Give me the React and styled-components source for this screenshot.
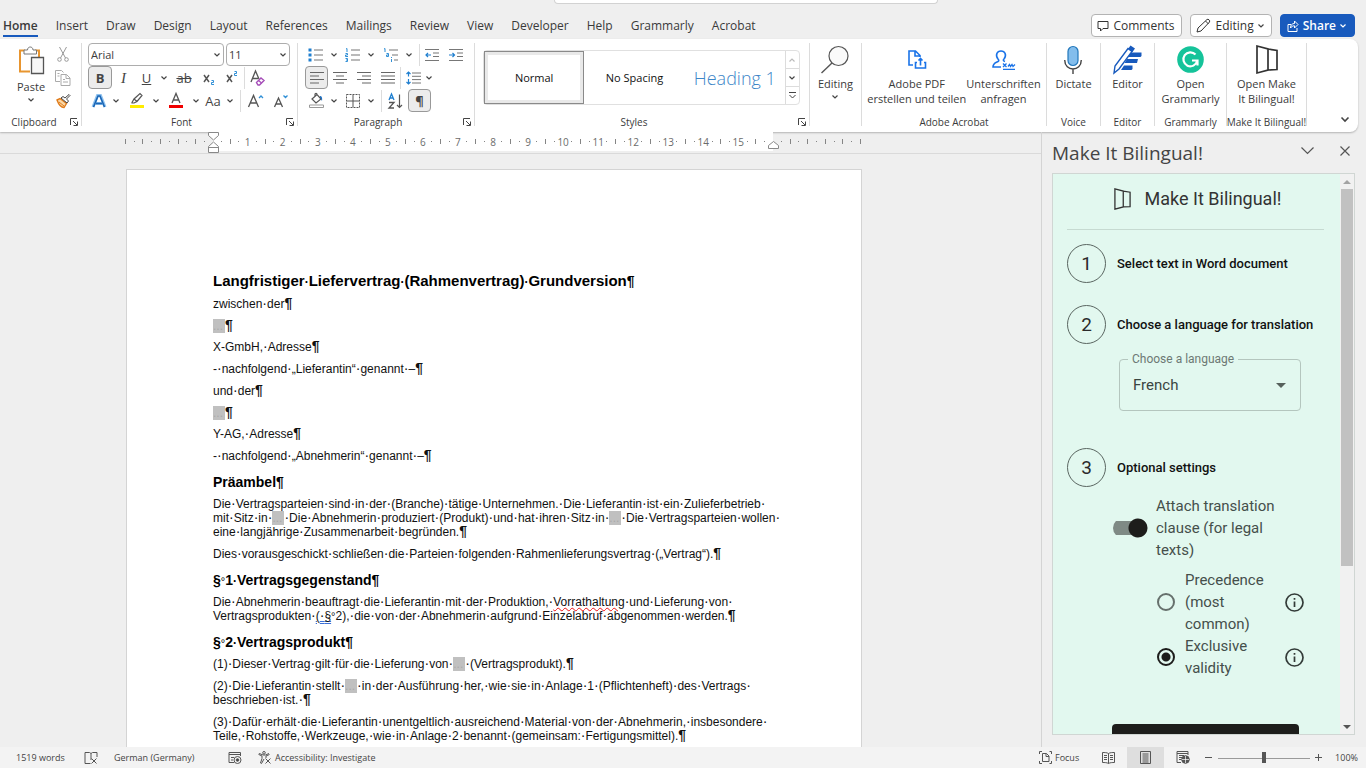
import React from "react";
import styled, { createGlobalStyle, css } from "styled-components";

const UI = `"Open Sans", "Noto Sans", sans-serif`;
const DOC = `"Liberation Sans", Arial, sans-serif`;
const WEB = `Roboto, "Liberation Sans", sans-serif`;

const GlobalStyle = createGlobalStyle`
  * { box-sizing: border-box; }
  body { margin: 0; background: #efefef; font-family: ${UI}; color: #3b3b3b; }
  button, input, select { font: inherit; color: inherit; }
  button { padding: 0; border: 0; background: none; }
  p, h1, h2, h3 { margin: 0; font-weight: 400; }
  svg { display: block; flex: none; overflow: visible; }
`;

const App = styled.div`
  display: flex;
  flex-direction: column;
  height: 100vh;
  overflow: hidden;
`;

/* ---------- title strip and tabs ---------- */
const TitleStrip = styled.div`
  height: 12px;
  flex: none;
  display: flex;
  justify-content: center;
  padding-left: 126px;
`;
const SearchBox = styled.div`
  width: 384px;
  height: 4px;
  background: #fff;
  border: 1px solid #d2d2d2;
  border-top: 0;
  border-radius: 0 0 4px 4px;
`;
const TabBar = styled.header`
  height: 27px;
  flex: none;
  display: flex;
  align-items: flex-end;
  justify-content: space-between;
  padding: 0 11px 2px 3px;
`;
const Tabs = styled.nav`
  display: flex;
  gap: 18px;
`;
const Tab = styled.a`
  font-size: 12px;
  line-height: 18px;
  color: #3a3a3a;
  text-decoration: none;
  white-space: nowrap;
  border-bottom: 2px solid ${(p) => (p.$active ? "#185abd" : "transparent")};
  font-weight: ${(p) => (p.$active ? 600 : 400)};
`;
const Actions = styled.div`
  display: flex;
  gap: 8px;
`;
const ActionButton = styled.button`
  height: 23px;
  display: flex;
  align-items: center;
  gap: 4px;
  padding: ${(p) => (p.$primary ? "0 8px 0 6px" : "0 7px 0 5px")};
  font-size: 12px;
  line-height: 20px;
  border-radius: 4px;
  border: 1px solid ${(p) => (p.$primary ? "#185abd" : "#b3b3b3")};
  background: ${(p) => (p.$primary ? "#185abd" : "#fff")};
  color: ${(p) => (p.$primary ? "#fff" : "#333")};
  font-weight: ${(p) => (p.$primary ? 600 : 400)};
`;

/* ---------- ribbon ---------- */
const Ribbon = styled.section`
  flex: none;
  height: 93px;
  margin-right: 8px;
  padding-left: 3px;
  display: flex;
  background: #fff;
  border-radius: 0 8px 8px 0;
  box-shadow: 0 1px 2px rgba(0, 0, 0, 0.25);
`;
const Group = styled.div`
  width: ${(p) => p.$w}px;
  flex: none;
  margin: 4px 0 2px;
  display: flex;
  flex-direction: column;
  padding-right: 1px;
  background: linear-gradient(#dcdcdc, #dcdcdc) right top / 1px 83px no-repeat;
  position: relative;
`;
const GroupBody = styled.div`
  flex: 1;
  min-height: 0;
  padding-left: ${(p) => p.$pad || 0}px;
`;
const GroupLabel = styled.div`
  height: 16px;
  display: flex;
  justify-content: center;
  align-items: center;
  font-size: 10px;
  line-height: 14px;
  white-space: nowrap;
  padding-right: ${(p) => (p.$launcher ? 16 : 0)}px;
`;
const Launcher = styled.button`
  position: absolute;
  right: 4px;
  bottom: 4px;
`;
const ToolRow = styled.div`
  height: 23px;
  display: flex;
  align-items: center;
`;
const Tool = styled.button`
  width: ${(p) => p.$w}px;
  height: 23px;
  flex: none;
  display: flex;
  align-items: center;
  justify-content: center;
  color: #444;
  font-size: 13px;
  line-height: 20px;
  white-space: nowrap;
  ${(p) =>
    p.$on &&
    css`
      background: #ececec;
      border: 1px solid #999;
      border-radius: 4px;
    `}
`;
const Italic = styled.i`
  font-family: "Liberation Serif", serif;
  font-size: 15px;
`;
const Sep = styled.i`
  width: 1px;
  height: 22px;
  flex: none;
  background: #dcdcdc;
  margin-left: ${(p) => p.$before || 0}px;
`;
const Combo = styled.label`
  width: ${(p) => p.$w}px;
  height: 23px;
  display: flex;
  align-items: center;
  padding: 0 3px 0 2px;
  margin-right: 2px;
  border: 1px solid #adadad;
  border-radius: 4px;
  select {
    appearance: none;
    flex: 1;
    min-width: 0;
    border: 0;
    padding: 0;
    background: none;
    font-size: 11px;
    line-height: 16px;
  }
`;
const Clipboard = styled.div`
  display: flex;
  gap: 6px;
  padding-left: 14px;
`;
const BigButton = styled.button`
  display: flex;
  flex-direction: column;
  align-items: center;
  min-width: ${(p) => p.$w || 0}px;
  font-size: 11px;
  line-height: 15px;
  white-space: nowrap;
  & > svg {
    margin-top: 4px;
  }
`;
const BigIcon = styled.span`
  height: ${(p) => (p.$tall ? 36 : 33)}px;
  display: flex;
  align-items: center;
  justify-content: center;
`;
const SmallStack = styled.div`
  display: flex;
  flex-direction: column;
`;
const Centered = styled.div`
  display: flex;
  justify-content: center;
`;
const Gallery = styled.div`
  display: flex;
  margin: 7px 9px 0 8px;
  height: 55px;
  border: 1px solid #e0e0e0;
  border-radius: 4px;
`;
const StyleCard = styled.button`
  flex: 1;
  margin: ${(p) => (p.$on ? "0" : "1px")};
  font-size: ${(p) => (p.$heading ? 18 : 11)}px;
  font-weight: ${(p) => (p.$heading ? 300 : 400)};
  color: ${(p) => (p.$heading ? "#3d86c8" : "#111")};
  white-space: nowrap;
  ${(p) =>
    p.$on &&
    css`
      border: 1px solid #8a8a8a;
      box-shadow: inset 0 0 0 3px #e9e9e9;
    `}
`;
const GalleryScroll = styled.div`
  width: 14px;
  display: flex;
  flex-direction: column;
  border-left: 1px solid #dcdcdc;
  button {
    flex: 1;
    display: flex;
    align-items: center;
    justify-content: center;
  }
  button + button {
    border-top: 1px solid #dcdcdc;
  }
`;
const CollapseButton = styled.button`
  margin: auto 9px 10px auto;
`;

/* ---------- work area ---------- */
const Work = styled.div`
  flex: 1;
  min-height: 0;
  display: flex;
`;
const Canvas = styled.main`
  flex: 1;
  min-width: 0;
  overflow: hidden;
  display: flex;
  flex-direction: column;
`;
const Ruler = styled.div`
  flex: none;
  height: 22px;
  padding: 0 0 2px 121px;
  display: flex;
  border-bottom: 1px solid #dadada;
  color: #6b6b6b;
  font-size: 10px;
  line-height: 16px;
`;
const Zone = styled.div`
  width: ${(p) => p.$w}px;
  flex: none;
  position: relative;
  display: grid;
  grid-template-columns: repeat(${(p) => p.$n}, minmax(0, 1fr));
  padding: 0 ${(p) => (p.$main ? 4 : 0)}px;
  margin: 0 ${(p) => (p.$main ? 0 : 4)}px 0 0;
  background: ${(p) => (p.$main ? "#fff" : "none")};
  & + & + & {
    margin-left: 4px;
  }
`;
const Mark = styled.span`
  display: flex;
  justify-content: center;
  align-items: center;
  white-space: nowrap;
  &::before {
    content: "";
    display: ${(p) => (p.$kind === "n" ? "none" : "block")};
    width: 1px;
    height: ${(p) => (p.$kind === "t" ? 5 : 1)}px;
    background: #858585;
  }
`;
const IndentMarker = styled.svg`
  position: absolute;
  top: ${(p) => p.$top}px;
  ${(p) => (p.$end ? "right: -6px;" : "left: -5px;")}
`;
const Sheet = styled.article`
  flex: none;
  width: 736px;
  min-height: 900px;
  margin: 15px 0 0 126px;
  padding: 102px 80px 80px 86px;
  background: #fff;
  border: 1px solid #d4d4d4;
  font-family: ${DOC};
  font-size: 12px;
  line-height: 14px;
  color: #111;
  white-space: nowrap;
`;
const DocTitle = styled.h1`
  font-size: 15px;
  line-height: 18px;
  font-weight: 700;
  color: #000;
  margin-bottom: 7px;
`;
const DocHeading = styled.h2`
  font-size: 14px;
  line-height: 16px;
  font-weight: 700;
  color: #000;
  margin: 11px 0 7px;
`;
const Para = styled.p`
  margin-bottom: ${(p) => (p.$tight ? 7 : 8)}px;
`;
const Line = styled.span`
  display: block;
`;
const Dot = styled.span`
  font-size: 14px;
  line-height: 0;
  h1 &,
  h2 & {
    font-size: 12px;
  }
`;
const Pilcrow = styled.span`
  font-size: 14px;
  line-height: 0;
  font-weight: 700;
`;
const FixedSpace = styled.span`
  font-size: 11px;
  line-height: 0;
  font-weight: 400;
`;
const Blank = styled.span`
  display: inline-block;
  width: 12px;
  height: 14px;
  vertical-align: bottom;
  background: #c0c0c0;
  color: #aaa;
`;
const Misspelt = styled.span`
  text-decoration: underline wavy #e11 1px;
  text-underline-offset: 1px;
`;
const Flagged = styled.span`
  text-decoration: underline double #3b6fd6 1px;
  text-underline-offset: 1px;
`;

/* ---------- task pane ---------- */
const Pane = styled.aside`
  width: 325px;
  flex: none;
  display: flex;
  flex-direction: column;
  border-left: 1px solid #d4d4d4;
  padding: 0 11px 12px 10px;
`;
const PaneHeader = styled.div`
  height: 41px;
  flex: none;
  display: flex;
  align-items: center;
  padding-right: 1px;
  h2 {
    flex: 1;
    font-size: 19px;
    line-height: 26px;
    font-weight: 400;
    color: #444;
  }
`;
const PaneButton = styled.button`
  width: 16px;
  height: 16px;
  display: flex;
  align-items: center;
  justify-content: center;
  margin: 0 1px 4px 21px;
`;
const Frame = styled.div`
  flex: 1;
  min-height: 0;
  display: flex;
  border: 1px solid #d0d6d3;
  background: #e2f8ef;
  font-family: ${WEB};
`;
const AddIn = styled.div`
  flex: 1;
  min-width: 0;
  overflow: hidden;
  padding: 0 16px 0 14px;
`;
const Scrollbar = styled.div`
  width: 14px;
  display: flex;
  flex-direction: column;
  justify-content: space-between;
  align-items: center;
  background: #f1f1f1;
`;
const ScrollThumb = styled.div`
  width: 12px;
  height: 377px;
  background: #c1c1c1;
  margin-bottom: auto;
`;
const ScrollArrow = styled.button`
  height: 15px;
  display: flex;
  align-items: center;
`;
const Brand = styled.div`
  height: 56px;
  display: flex;
  align-items: center;
  justify-content: center;
  gap: 14px;
  padding: 0 0 6px 4px;
  border-bottom: 1px solid #c6dad1;
  font-size: 18px;
  line-height: 24px;
  color: #333;
`;
const Step = styled.div`
  display: flex;
  align-items: center;
  gap: 11px;
  height: 39px;
  margin-top: ${(p) => p.$top}px;
  h3 {
    font-size: 13px;
    line-height: 20px;
    font-weight: 500;
    color: #111;
    white-space: nowrap;
  }
`;
const StepNumber = styled.span`
  width: 39px;
  height: 39px;
  flex: none;
  display: flex;
  align-items: center;
  justify-content: center;
  border: 1px solid #5a6661;
  border-radius: 50%;
  font-size: 19px;
  color: #2b2b2b;
`;
const Field = styled.div`
  position: relative;
  margin: 15px 23px 0 52px;
  height: 52px;
  display: flex;
  align-items: center;
  border: 1px solid #b4c6be;
  border-radius: 4px;
  label {
    position: absolute;
    left: 8px;
    top: -8px;
    padding: 0 4px;
    background: #e2f8ef;
    font-size: 12px;
    line-height: 14px;
    color: #6d7974;
  }
  select {
    appearance: none;
    flex: 1;
    align-self: stretch;
    border: 0;
    padding: 0 13px;
    background: none;
    font-size: 15px;
    color: #3a4541;
  }
  svg {
    margin-right: 14px;
  }
`;
const SwitchRow = styled.div`
  display: flex;
  align-items: center;
  gap: 8px;
  margin: 8px 30px 0 46px;
  font-size: 15px;
  line-height: 22px;
  color: #454f4b;
`;
const Switch = styled.input`
  appearance: none;
  flex: none;
  width: 35px;
  height: 20px;
  margin: 0;
  border-radius: 10px;
  background:
    radial-gradient(circle at 25px 10px, #1d1d1b 9px, transparent 10px),
    linear-gradient(#7f8a85, #7f8a85) 0 3px / 30px 14px no-repeat;
`;
const RadioRow = styled.div`
  display: flex;
  align-items: center;
  margin: 0 20px 0 90px;
  padding-top: ${(p) => p.$top || 0}px;
  font-size: 15px;
  line-height: 22px;
  color: #454f4b;
  label {
    flex: 1;
    padding: 0 18px 0 10px;
  }
`;
const Radio = styled.input`
  appearance: none;
  flex: none;
  width: 18px;
  height: 18px;
  margin: 0;
  border: 2px solid #66706c;
  border-radius: 50%;
  &:checked {
    border-color: #1d1d1b;
    background: radial-gradient(circle, #1d1d1b 4px, transparent 5px);
  }
`;
const SubmitButton = styled.button`
  display: block;
  width: 187px;
  height: 36px;
  margin: 45px 0 0 45px;
  border-radius: 4px;
  background: #1d1d1b;
`;

/* ---------- status bar ---------- */
const StatusBar = styled.footer`
  flex: none;
  height: 21px;
  display: flex;
  align-items: center;
  justify-content: space-between;
  background: #f3f3f3;
  padding: 0 8px 0 16px;
  font-size: 9px;
  line-height: 14px;
  color: #444;
`;
const StatusSide = styled.div`
  display: flex;
  align-items: center;
  height: 21px;
`;
const StatusItem = styled.button`
  display: flex;
  align-items: center;
  justify-content: ${(p) => (p.$center ? "center" : p.$end ? "flex-end" : "flex-start")};
  gap: 3px;
  height: 21px;
  width: ${(p) => (p.$w ? p.$w + "px" : "auto")};
  white-space: nowrap;
  background: ${(p) => (p.$on ? "#dedede" : "none")};
`;
const Zoom = styled.input`
  appearance: none;
  width: 92px;
  height: 12px;
  margin: 0 1px 0 2px;
  background: linear-gradient(#9a9a9a, #9a9a9a) 0 6px / 100% 1px no-repeat;
  &::-webkit-slider-thumb {
    appearance: none;
    width: 4px;
    height: 11px;
    background: #555;
  }
`;

/* ---------- icons ---------- */
const Svg = ({ w, h, children, ...rest }) => (
  <svg width={w} height={h} viewBox={`0 0 ${w} ${h}`} fill="none" stroke="#555" strokeWidth="1" aria-hidden="true" {...rest}>
    {children}
  </svg>
);
const Chev = ({ s = 6, c = "#444", up, sw = 1.2 }) => (
  <Svg w={s} h={s / 2 + 1} stroke={c} strokeWidth={sw}>
    <path d={up ? `M.5 ${s / 2 + 0.5}L${s / 2} 1L${s - 0.5} ${s / 2 + 0.5}` : `M.5 .5L${s / 2} ${s / 2}L${s - 0.5} .5`} />
  </Svg>
);
const LaunchIcon = () => (
  <Svg w={8} h={8}>
    <path d="M.5 7V.5H7M3 3l4 4M7.5 3.5v4h-4" stroke="#444" />
  </Svg>
);
const PasteIcon = () => (
  <Svg w={27} h={30}>
    <path d="M7 4.500H2v21h10M17 4.500h4V11" stroke="#e8952f" strokeWidth="2" />
    <path d="M6 8V4h3.500c0-4 5.500-4 5.500 0H18.500v4z" fill="#fff" stroke="#777" />
    <path d="M13.500 11.500h12v16h-12z" fill="#f7f7f7" stroke="#555" strokeWidth="1.300" />
  </Svg>
);
const CutIcon = () => (
  <Svg w={12} h={15} stroke="#999">
    <path d="M2.500 0L8.500 11M9.500 0L3.500 11" />
    <circle cx="2.500" cy="12.500" r="1.800" />
    <circle cx="9.500" cy="12.500" r="1.800" />
  </Svg>
);
const CopyIcon = () => (
  <Svg w={16} h={16} stroke="#aaa">
    <path d="M5 11.500H.5v-11h6l2 2" />
    <path d="M6 4.500h5.500l3.500 3.500v7.500H6zM11 4.500V8.500h4M8 9.500h2M8 12h5M2.500 3.500h2M2.500 6h2" />
  </Svg>
);
const BrushIcon = () => (
  <Svg w={15} h={14}>
    <path d="M1 6l3-1.500 6.500 5-2.500 4c-3 0-5-2-7-7.500z" fill="#fbd9a8" stroke="#e07b1a" strokeWidth="1.400" />
    <path d="M3 8l5 4" stroke="#e07b1a" />
    <path d="M5 4l6 5 1.500-2-2-2L14 1.500 13 .5 9 4 7 2.500z" fill="#fff" stroke="#444" />
  </Svg>
);
const EraserA = () => (
  <Svg w={16} h={16} strokeWidth="1.300">
    <path d="M1 12L5.500 1 9 9M2.700 8.500H8" />
    <path d="M6.500 12.500L11 8l3 2.500-4.500 4.500H8z" stroke="#a54db8" strokeWidth="1.400" fill="#fff" />
    <path d="M8.500 10.500l3 2.500" stroke="#a54db8" />
  </Svg>
);
const EffectA = () => (
  <Svg w={14} h={14}>
    <path d="M1 13L5.500 1.500h3L13 13M3.500 9.500h7" stroke="#8ec1ee" strokeWidth="3" />
    <path d="M1.500 13L6 2h2l4.500 11M4 9.500h6" stroke="#1b66b5" strokeWidth="1.600" />
  </Svg>
);
const HighlightIcon = () => (
  <Svg w={16} h={16}>
    <path d="M3 9.500L5 6l6-5.500 2 2L8 8.500 5 10H3zM5 6l3 2.500" stroke="#555" strokeWidth="1.200" />
    <path d="M1 12h14v3H1z" fill="#ffec00" stroke="none" />
  </Svg>
);
const ColorA = () => (
  <Svg w={16} h={16}>
    <path d="M4 10L8 .5 12 10M5.500 7h5" strokeWidth="1.300" />
    <path d="M1 12h14v3H1z" fill="#f00000" stroke="none" />
  </Svg>
);
const SizeA = ({ small, up }) => (
  <Svg w={15} h={14} strokeWidth="1.300">
    <path d={small ? "M1.500 13L5.500 4l4 9M3 10h5" : "M.5 13L5.500 1.500 10.500 13M2.500 9h6"} />
    <path d={up ? "M11 4l2-2 2 2" : "M10.500 1.500l2 2 2-2"} stroke="#2f8fd6" />
  </Svg>
);
const ListIcon = ({ kind }) => (
  <Svg w={16} h={14}>
    <path
      d={kind === "multi" ? "M6 2h9M9 7h6M11 12h4" : "M6 2h9M6 7h9M6 12h9"}
      stroke="#777"
      strokeWidth="1.200"
    />
    {kind === "bullet" && <path d="M.5 .5h3v3h-3zM.5 5.500h3v3h-3zM.5 10.500h3v3h-3z" fill="#1f7fd0" stroke="none" />}
    {kind === "number" && <path d="M1 1l1-.5V4M.5 5.500h2v1.500h-2V8.500h2.500M.5 10.500h2V13.500h-2M1 12h1.500" stroke="#2f8fd6" />}
    {kind === "multi" && <path d="M1 1l1-.5V4M3.500 5.500h2V8.500h-2V7h2M8.500 11v3M8.500 9v1" stroke="#2f8fd6" />}
  </Svg>
);
const IndentIcon = ({ out }) => (
  <Svg w={14} h={14}>
    <path d="M0 1.500h14M8 5h6M8 8.500h6M0 12.500h14" stroke="#777" strokeWidth="1.200" />
    <path d={out ? "M6 7H1M3 5L1 7l2 2" : "M0 7h5M3.500 5l2 2-2 2"} stroke="#1f7fd0" strokeWidth="1.200" />
  </Svg>
);
const AlignIcon = ({ kind }) => {
  const d = {
    left: "M0 1.500h14M0 5h9M0 8.500h14M0 12h9",
    center: "M0 1.500h14M3 5h8M0 8.500h14M3 12h8",
    right: "M0 1.500h14M5 5h9M0 8.500h14M5 12h9",
    full: "M0 1.500h14M0 5h14M0 8.500h14M0 12h14",
  }[kind];
  return (
    <Svg w={14} h={14}>
      <path d={d} stroke="#666" strokeWidth="1.200" />
    </Svg>
  );
};
const SpacingIcon = () => (
  <Svg w={15} h={14}>
    <path d="M6 2h9M6 5.300h9M6 8.600h9M6 12h9" stroke="#777" />
    <path d="M2.500 1v4.500M.5 3l2-2 2 2M2.500 8v5M.5 11l2 2 2-2" stroke="#1f7fd0" strokeWidth="1.200" />
  </Svg>
);
const BucketIcon = () => (
  <Svg w={15} h={15}>
    <path d="M3 6l5-4.500L12 6 7 10zM6 3V1.500C6 0 8 0 8 1.500" strokeWidth="1.200" />
    <path d="M11 3c2 0 2.500 2 2 5-1-1-1-3-2-3z" fill="#1f6fc0" stroke="none" />
    <path d="M.5 12h14v2.500H.5z" stroke="#999" />
  </Svg>
);
const BordersIcon = () => (
  <Svg w={14} h={14}>
    <path d="M.5 .5h13v13H.5z" stroke="#555" strokeDasharray="2 1" />
    <path d="M7 1v12M1 7h12" stroke="#555" />
  </Svg>
);
const SortIcon = () => (
  <Svg w={15} h={16}>
    <path d="M1 7L3.500 1 6 7M2 5h3" stroke="#1f7fd0" strokeWidth="1.300" />
    <path d="M1 9.500h5l-5 5.500h5" strokeWidth="1.300" />
    <path d="M11.500 1.500v13M9 12l2.500 2.500L14 12" strokeWidth="1.200" />
  </Svg>
);
const SearchIcon = () => (
  <Svg w={28} h={28}>
    <circle cx="17.500" cy="10" r="9.500" fill="#fafafa" strokeWidth="1.200" />
    <path d="M11 17L.5 27" strokeWidth="1.400" />
  </Svg>
);
const PdfIcon = () => (
  <Svg w={18} h={19} stroke="#1a73e8" strokeWidth="1.600">
    <path d="M5 15H1V1h6.500L12 5.500V7M7 1v5h5" />
    <path d="M9 12.500H7.500V18h10v-5.500H16M12.500 15.500V9M10.500 10.500l2-2 2 2" />
  </Svg>
);
const SignIcon = () => (
  <Svg w={24} h={20} stroke="#1a73e8" strokeWidth="1.600">
    <path d="M9 17H1c0-4 3-4.500 5-5.500 1-.5 1-1.500 0-2.500C3 5 5 1 9 1s6 4 3 8c-1 1-1 1.800 1 2.500" />
    <path d="M11 13.500l3.500 3.500M14.500 13.500L11 17M16 16.500l1.500-2 1 2 1.500-2 1 2 2-2M11 19.300h12" strokeWidth="1.300" />
  </Svg>
);
const MicIcon = () => (
  <Svg w={18} h={28}>
    <rect x="4" y=".5" width="10" height="19" rx="5" fill="#83bdec" stroke="#2277bb" strokeWidth="1.200" />
    <path d="M.7 14c0 12 16.600 12 16.600 0M9 23v5" stroke="#444" strokeWidth="1.400" />
  </Svg>
);
const EditorIcon = () => (
  <Svg w={29} h={29}>
    <path d="M17 7.500h11.500V11l-1 1H14zM14 14h11l-1 4H11.500zM11 20.500h8.500V24l-1 1H8z" fill="#185abd" stroke="none" />
    <path d="M1 28l1-7L15 3.500l4 3L6 24z" fill="#fff" stroke="#185abd" strokeWidth="1.400" />
    <path d="M15 4L17.500.5l4.500 3L19.500 7z" fill="#185abd" stroke="none" />
  </Svg>
);
const GrammarlyIcon = () => (
  <Svg w={27} h={27}>
    <circle cx="13.500" cy="13.500" r="13.300" fill="#15c39a" stroke="none" />
    <path d="M18.500 8.500a7 7 0 1 0 1.700 6.500M15 14.500h5.500v5" stroke="#fff" strokeWidth="2.200" />
  </Svg>
);
const WindowIcon = ({ w = 22, h = 29 }) => (
  <svg width={w} height={h} viewBox="0 0 22 29" fill="none" stroke="#333" strokeWidth="1.700" aria-hidden="true">
    <path d="M1 1l11 3v21L1 28zM12 4l9 1.500v19L12 25" />
  </svg>
);
const CommentIcon = () => (
  <Svg w={12} h={12} stroke="#333">
    <path d="M1 1.500h10v7H6L3.500 11V8.500H1z" />
  </Svg>
);
const PencilIcon = () => (
  <Svg w={15} h={15} stroke="#333">
    <path d="M1 14l1-4L11 1.500c1-1 3.500 1 2.500 2.500L5 13zM9.500 3l3 3" />
  </Svg>
);
const ShareIcon = () => (
  <Svg w={12} h={12} stroke="#fff">
    <path d="M4 4.500H1v7h9V8M3.500 8c0-3 1.500-4.500 4-4.500V1L11 4.500 7.500 8V5.800C5.500 5.800 4.500 6.500 3.500 8z" />
  </Svg>
);
const InfoIcon = () => (
  <Svg w={19} h={19} stroke="#333b38">
    <circle cx="9.500" cy="9.500" r="8.500" strokeWidth="1.700" />
    <path d="M9.500 8.500v5.500M9.500 5v1.800" strokeWidth="1.700" />
  </Svg>
);
const ProofIcon = () => (
  <Svg w={14} h={12}>
    <path d="M6.500 11.500H1V.5h4.500l1.500 1 1.500-1H13V5M7 1.500V8M7.500 6.500l5 5M12.500 6.500l-5 5" />
  </Svg>
);
const MacroIcon = () => (
  <Svg w={14} h={12}>
    <path d="M6 10.500H1V.5h11.500V4M1 2.500h11.500M3 5.500h3M3 8h2" />
    <circle cx="9.500" cy="8" r="3.500" />
    <circle cx="9.500" cy="8" r="1.300" fill="#444" />
  </Svg>
);
const AccessIcon = () => (
  <Svg w={14} h={13}>
    <circle cx="6" cy="1.800" r="1.300" />
    <path d="M.8 3.500L4 5v2.500L2.500 12l1 .5L6 8M11.500 3.500L8 5v2M.8 3.500l.5-1L5 4h2.500L11 2.500M7.500 7.500l5 5M12.500 7.500l-5 5" />
  </Svg>
);
const FocusIcon = () => (
  <Svg w={13} h={13}>
    <path d="M.5 3V.5H3M10.500 .5h2V3M.5 10v2.500H3M12.500 10v2.500h-2M3.500 2.500h4l2.500 2.500v5.500H3.500zM7 2.500V5.500h3" />
  </Svg>
);
const ReadIcon = () => (
  <Svg w={13} h={12}>
    <path d="M6.500 1.500V11.500M6.500 1.500C5 .5 2.500 .5.5 .5v10c2 0 4.500 0 6 1 1.500-1 4-1 6-1V.5c-2 0-4.500 0-6 1zM2 3.500h3M2 5.500h3M2 7.500h3M8 3.500h3M8 5.500h3M8 7.500h3" />
  </Svg>
);
const PrintIcon = () => (
  <Svg w={11} h={13}>
    <path d="M.5 .5h10v12H.5zM2.500 3h6M2.500 5h6M2.500 7h6M2.500 9h6M2.500 11h6" />
  </Svg>
);
const WebIcon = () => (
  <Svg w={14} h={13}>
    <path d="M5 11.500H1V.5h11V4M1 2.500h11M3 4.500h5M3 6.500h3M3 8.500h2" />
    <circle cx="9.500" cy="8.500" r="3.800" fill="#555" />
    <path d="M6 8.500h7M9.500 5v7" stroke="#fff" strokeWidth=".7" />
  </Svg>
);
const Triangle = ({ up, w = 8, c = "#555" }) => (
  <svg width={w} height={w / 2} viewBox="0 0 8 4" aria-hidden="true">
    <path d={up ? "M0 4L4 0l4 4z" : "M0 0h8L4 4z"} fill={c} />
  </svg>
);

/* ---------- parts ---------- */
const Drop = ({ w, label }) => (
  <Tool $w={w} aria-label={label}>
    <Chev />
  </Tool>
);
const RibbonGroup = ({ w, pad, label, launcher, children }) => (
  <Group $w={w}>
    <GroupBody $pad={pad}>{children}</GroupBody>
    <GroupLabel $launcher={launcher}>{label}</GroupLabel>
    {launcher && (
      <Launcher aria-label={`${label} settings`}>
        <LaunchIcon />
      </Launcher>
    )}
  </Group>
);
const Big = ({ w, icon, lines }) => (
  <BigButton $w={w}>
    <BigIcon>{icon}</BigIcon>
    {lines.map((l) => (
      <span key={l}>{l}</span>
    ))}
  </BigButton>
);

// Draws formatting marks: spaces as centred dots, fixed spaces and paragraph ends with their own glyphs.
const T = ({ children }) =>
  children.split(/([ °¶])/).map((part, i) => {
    if (part === " ") return <Dot key={i}>·</Dot>;
    if (part === "°") return <FixedSpace key={i}>°</FixedSpace>;
    if (part === "¶") return <Pilcrow key={i}>¶</Pilcrow>;
    return <React.Fragment key={i}>{part}</React.Fragment>;
  });
const Gap = () => <Blank>...</Blank>;

const mainMarks = Array.from({ length: 63 }, (_, i) => {
  const q = i + 1;
  if (q % 4 === 0) return { k: "n", v: q / 4 };
  return { k: q % 2 === 0 ? "t" : "d" };
});
const TABS = ["Home", "Insert", "Draw", "Design", "Layout", "References", "Mailings", "Review", "View", "Developer", "Help", "Grammarly", "Acrobat"];

export default function WordWindow() {
  return (
    <App>
      <GlobalStyle />
      <TitleStrip>
        <SearchBox />
      </TitleStrip>
      <TabBar>
        <Tabs>
          {TABS.map((t, i) => (
            <Tab key={t} href="#" $active={i === 0}>
              {t}
            </Tab>
          ))}
        </Tabs>
        <Actions>
          <ActionButton>
            <CommentIcon />
            Comments
          </ActionButton>
          <ActionButton>
            <PencilIcon />
            Editing
            <Chev />
          </ActionButton>
          <ActionButton $primary>
            <ShareIcon />
            Share
            <Chev c="#fff" />
          </ActionButton>
        </Actions>
      </TabBar>

      <Ribbon>
        <RibbonGroup w={79} label="Clipboard" launcher>
          <Clipboard>
            <BigButton>
              <BigIcon $tall><PasteIcon /></BigIcon>
              <span>Paste</span>
              <Chev />
            </BigButton>
            <SmallStack>
              <Tool $w={24} aria-label="Cut"><CutIcon /></Tool>
              <Tool $w={24} aria-label="Copy"><CopyIcon /></Tool>
              <Tool $w={24} aria-label="Format painter"><BrushIcon /></Tool>
            </SmallStack>
          </Clipboard>
        </RibbonGroup>

        <RibbonGroup w={216} pad={6} label="Font" launcher>
          <ToolRow>
            <Combo $w={136}>
              <select aria-label="Font name"><option>Arial</option></select>
              <Chev />
            </Combo>
            <Combo $w={64}>
              <select aria-label="Font size"><option>11</option></select>
              <Chev />
            </Combo>
          </ToolRow>
          <ToolRow>
            <Tool $w={24} $on><b>B</b></Tool>
            <Tool $w={23}><Italic>I</Italic></Tool>
            <Tool $w={23}><u>U</u></Tool>
            <Drop w={12} label="Underline style" />
            <Tool $w={28}><s>ab</s></Tool>
            <Tool $w={24} aria-label="Subscript">
              <Svg w={14} h={14}>
                <path d="M1 4l5 7M6 4L1 11" strokeWidth="1.500" />
                <path d="M8.500 9.500h2v2h-2v2H11" stroke="#2f8fd6" />
              </Svg>
            </Tool>
            <Tool $w={22} aria-label="Superscript">
              <Svg w={14} h={14}>
                <path d="M1 4l5 7M6 4L1 11" strokeWidth="1.500" />
                <path d="M8.500 .5h2v2h-2v2H11" stroke="#2f8fd6" />
              </Svg>
            </Tool>
            <Sep />
            <Tool $w={26} aria-label="Clear formatting"><EraserA /></Tool>
          </ToolRow>
          <ToolRow>
            <Tool $w={22} aria-label="Text effects"><EffectA /></Tool>
            <Drop w={12} label="Text effects menu" />
            <Tool $w={30} aria-label="Highlight"><HighlightIcon /></Tool>
            <Drop w={8} label="Highlight colours" />
            <Tool $w={32} aria-label="Font colour"><ColorA /></Tool>
            <Drop w={8} label="Font colours" />
            <Tool $w={26}>Aa</Tool>
            <Drop w={8} label="Change case" />
            <Sep $before={6} />
            <Tool $w={28} aria-label="Grow font"><SizeA up /></Tool>
            <Tool $w={22} aria-label="Shrink font"><SizeA small /></Tool>
          </ToolRow>
        </RibbonGroup>

        <RibbonGroup w={177} pad={7} label="Paragraph" launcher>
          <ToolRow>
            <Tool $w={22} aria-label="Bullets"><ListIcon kind="bullet" /></Tool>
            <Drop w={14} label="Bullet styles" />
            <Tool $w={24} aria-label="Numbering"><ListIcon kind="number" /></Tool>
            <Drop w={12} label="Number styles" />
            <Tool $w={28} aria-label="Multilevel list"><ListIcon kind="multi" /></Tool>
            <Drop w={8} label="List styles" />
            <Sep $before={6} />
            <Tool $w={24} aria-label="Decrease indent"><IndentIcon out /></Tool>
            <Tool $w={24} aria-label="Increase indent"><IndentIcon /></Tool>
          </ToolRow>
          <ToolRow>
            <Tool $w={23} $on aria-label="Align left"><AlignIcon kind="left" /></Tool>
            <Tool $w={24} aria-label="Centre"><AlignIcon kind="center" /></Tool>
            <Tool $w={24} aria-label="Align right"><AlignIcon kind="right" /></Tool>
            <Tool $w={24} aria-label="Justify"><AlignIcon kind="full" /></Tool>
            <Sep />
            <Tool $w={24} aria-label="Line spacing"><SpacingIcon /></Tool>
            <Drop w={8} label="Line spacing menu" />
          </ToolRow>
          <ToolRow>
            <Tool $w={22} aria-label="Shading"><BucketIcon /></Tool>
            <Drop w={14} label="Shading colours" />
            <Tool $w={24} aria-label="Borders"><BordersIcon /></Tool>
            <Drop w={12} label="Border styles" />
            <Sep $before={4} />
            <Tool $w={26} aria-label="Sort"><SortIcon /></Tool>
            <Tool $w={23} $on><b>¶</b></Tool>
          </ToolRow>
        </RibbonGroup>

        <RibbonGroup w={335} label="Styles" launcher>
          <Gallery>
            <StyleCard $on>Normal</StyleCard>
            <StyleCard>No Spacing</StyleCard>
            <StyleCard $heading>Heading 1</StyleCard>
            <GalleryScroll>
              <button aria-label="Previous styles"><Chev up c="#bbb" /></button>
              <button aria-label="Next styles"><Chev /></button>
              <button aria-label="All styles">
                <Svg w={7} h={7} stroke="#444"><path d="M0 .5h7M.5 3l3 3 3-3" /></Svg>
              </button>
            </GalleryScroll>
          </Gallery>
        </RibbonGroup>

        <RibbonGroup w={52}>
          <Centered>
            <BigButton>
              <BigIcon><SearchIcon /></BigIcon>
              <span>Editing</span>
              <Chev />
            </BigButton>
          </Centered>
        </RibbonGroup>
        <RibbonGroup w={185} label="Adobe Acrobat">
          <Centered>
            <Big w={98} icon={<PdfIcon />} lines={["Adobe PDF", "erstellen und teilen"]} />
            <Big w={74} icon={<SignIcon />} lines={["Unterschriften", "anfragen"]} />
          </Centered>
        </RibbonGroup>
        <RibbonGroup w={54} label="Voice">
          <Centered><Big icon={<MicIcon />} lines={["Dictate"]} /></Centered>
        </RibbonGroup>
        <RibbonGroup w={54} label="Editor">
          <Centered><Big icon={<EditorIcon />} lines={["Editor"]} /></Centered>
        </RibbonGroup>
        <RibbonGroup w={72} label="Grammarly">
          <Centered><Big icon={<GrammarlyIcon />} lines={["Open", "Grammarly"]} /></Centered>
        </RibbonGroup>
        <RibbonGroup w={80} label="Make It Bilingual!">
          <Centered><Big icon={<WindowIcon />} lines={["Open Make", "It Bilingual!"]} /></Centered>
        </RibbonGroup>
        <CollapseButton aria-label="Collapse ribbon"><Chev s={8} sw={1.6} /></CollapseButton>
      </Ribbon>

      <Work>
        <Canvas>
          <Ruler>
            <Zone $w={88} $n={10}>
              {Array.from({ length: 10 }, (_, i) => <Mark key={i} $kind={i % 2 ? "d" : "t"} />)}
            </Zone>
            <Zone $w={560} $n={63} $main>
              {mainMarks.map((m, i) => <Mark key={i} $kind={m.k}>{m.v}</Mark>)}
              <IndentMarker $top={0} width="11" height="22" viewBox="0 0 11 22" fill="#fff" stroke="#888">
                <path d="M.5 .5h10v3L5.500 8 .5 3.500zM.5 20.500v-6l5-4.500 5 4.500v6zM.5 15.500h10" />
              </IndentMarker>
              <IndentMarker $end $top={9} width="11" height="9" viewBox="0 0 11 9" fill="#fff" stroke="#888">
                <path d="M.5 7.500V4.500L5.500 .5l5 4v3z" />
              </IndentMarker>
            </Zone>
            <Zone $w={88} $n={10}>
              {Array.from({ length: 10 }, (_, i) => <Mark key={i} $kind={i % 2 ? "t" : "d"} />)}
            </Zone>
          </Ruler>
          <Sheet lang="de">
            <DocTitle><T>Langfristiger Liefervertrag (Rahmenvertrag) Grundversion¶</T></DocTitle>
            <Para><T>zwischen der¶</T></Para>
            <Para $tight><Gap /><T>¶</T></Para>
            <Para><T>X-GmbH, Adresse¶</T></Para>
            <Para><T>- nachfolgend „Lieferantin“ genannt –¶</T></Para>
            <Para><T>und der¶</T></Para>
            <Para $tight><Gap /><T>¶</T></Para>
            <Para><T>Y-AG, Adresse¶</T></Para>
            <Para><T>- nachfolgend „Abnehmerin“ genannt –¶</T></Para>
            <DocHeading><T>Präambel¶</T></DocHeading>
            <Para>
              <Line><T>Die Vertragsparteien sind in der (Branche) tätige Unternehmen. Die Lieferantin ist ein Zulieferbetrieb </T></Line>
              <Line><T>mit Sitz in </T><Gap /><T> Die Abnehmerin produziert (Produkt) und hat ihren Sitz in </T><Gap /><T> Die Vertragsparteien wollen </T></Line>
              <Line><T>eine langjährige Zusammenarbeit begründen.¶</T></Line>
            </Para>
            <Para><T>Dies vorausgeschickt schließen die Parteien folgenden Rahmenlieferungsvertrag („Vertrag“).¶</T></Para>
            <DocHeading><T>§°1 Vertragsgegenstand¶</T></DocHeading>
            <Para>
              <Line><T>Die Abnehmerin beauftragt die Lieferantin mit der Produktion, </T><Misspelt>Vorrathaltung</Misspelt><T> und Lieferung von </T></Line>
              <Line><T>Vertragsprodukten </T><Flagged><T>( §</T></Flagged><T>°2), die von der Abnehmerin aufgrund Einzelabruf abgenommen werden.¶</T></Line>
            </Para>
            <DocHeading><T>§°2 Vertragsprodukt¶</T></DocHeading>
            <Para><T>(1) Dieser Vertrag gilt für die Lieferung von </T><Gap /><T> (Vertragsprodukt).¶</T></Para>
            <Para>
              <Line><T>(2) Die Lieferantin stellt </T><Gap /><T> in der Ausführung her, wie sie in Anlage 1 (Pflichtenheft) des Vertrags </T></Line>
              <Line><T>beschrieben ist. ¶</T></Line>
            </Para>
            <Para>
              <Line><T>(3) Dafür erhält die Lieferantin unentgeltlich ausreichend Material von der Abnehmerin, insbesondere </T></Line>
              <Line><T>Teile, Rohstoffe, Werkzeuge, wie in Anlage 2 benannt (gemeinsam: Fertigungsmittel).¶</T></Line>
            </Para>
          </Sheet>
        </Canvas>

        <Pane>
          <PaneHeader>
            <h2>Make It Bilingual!</h2>
            <PaneButton aria-label="Pane options"><Chev s={13} c="#555" /></PaneButton>
            <PaneButton aria-label="Close pane">
              <Svg w={10} h={10}><path d="M.5 .5l9 9M9.500 .5l-9 9" strokeWidth="1.200" /></Svg>
            </PaneButton>
          </PaneHeader>
          <Frame>
            <AddIn>
              <Brand>
                <WindowIcon w={17} h={22} />
                Make It Bilingual!
              </Brand>
              <Step $top={14}><StepNumber>1</StepNumber><h3>Select text in Word document</h3></Step>
              <Step $top={22}><StepNumber>2</StepNumber><h3>Choose a language for translation</h3></Step>
              <Field>
                <label htmlFor="language">Choose a language</label>
                <select id="language"><option>French</option></select>
                <Triangle w={10} c="#56615c" />
              </Field>
              <Step $top={37}><StepNumber>3</StepNumber><h3>Optional settings</h3></Step>
              <SwitchRow>
                <Switch id="clause" type="checkbox" defaultChecked />
                <label htmlFor="clause">Attach translation clause (for legal texts)</label>
              </SwitchRow>
              <RadioRow $top={8}>
                <Radio id="precedence" type="radio" name="validity" />
                <label htmlFor="precedence">Precedence (most common)</label>
                <button aria-label="About precedence"><InfoIcon /></button>
              </RadioRow>
              <RadioRow>
                <Radio id="exclusive" type="radio" name="validity" defaultChecked />
                <label htmlFor="exclusive">Exclusive validity</label>
                <button aria-label="About exclusive validity"><InfoIcon /></button>
              </RadioRow>
              <SubmitButton aria-label="Translate" />
            </AddIn>
            <Scrollbar>
              <ScrollArrow aria-label="Scroll up"><Triangle up c="#a3a3a3" /></ScrollArrow>
              <ScrollThumb />
              <ScrollArrow aria-label="Scroll down"><Triangle /></ScrollArrow>
            </Scrollbar>
          </Frame>
        </Pane>
      </Work>

      <StatusBar>
        <StatusSide>
          <StatusItem $w={68}>1519 words</StatusItem>
          <StatusItem $w={30} aria-label="Proofing"><ProofIcon /></StatusItem>
          <StatusItem $w={114}>German (Germany)</StatusItem>
          <StatusItem $w={30} aria-label="Record macro"><MacroIcon /></StatusItem>
          <StatusItem><AccessIcon />Accessibility: Investigate</StatusItem>
        </StatusSide>
        <StatusSide>
          <StatusItem $w={51}><FocusIcon />Focus</StatusItem>
          <StatusItem $w={37} $center aria-label="Read mode"><ReadIcon /></StatusItem>
          <StatusItem $w={37} $center $on aria-label="Print layout"><PrintIcon /></StatusItem>
          <StatusItem $w={37} $center aria-label="Web layout"><WebIcon /></StatusItem>
          <StatusItem $w={15} $center aria-label="Zoom out"><Svg w={7} h={7}><path d="M0 3.500h7" /></Svg></StatusItem>
          <Zoom type="range" aria-label="Zoom" min="10" max="190" defaultValue="100" />
          <StatusItem $w={15} $center aria-label="Zoom in"><Svg w={7} h={7}><path d="M0 3.500h7M3.500 0v7" /></Svg></StatusItem>
          <StatusItem $w={32} $end>100%</StatusItem>
        </StatusSide>
      </StatusBar>
    </App>
  );
}
